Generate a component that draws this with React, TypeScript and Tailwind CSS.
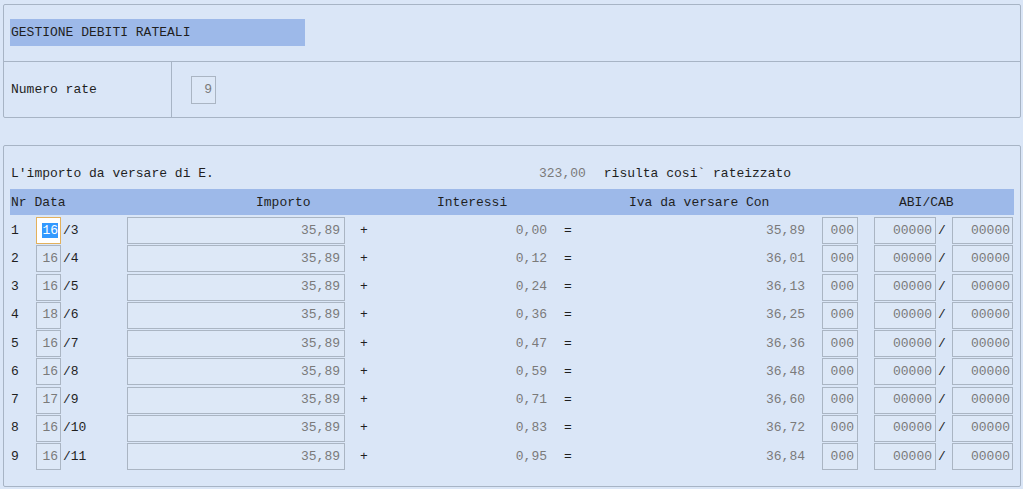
import React from 'react';

const rows = [
  { nr: 1, day: '16', month: '/3', importo: '35,89', interessi: '0,00', iva: '35,89' },
  { nr: 2, day: '16', month: '/4', importo: '35,89', interessi: '0,12', iva: '36,01' },
  { nr: 3, day: '16', month: '/5', importo: '35,89', interessi: '0,24', iva: '36,13' },
  { nr: 4, day: '18', month: '/6', importo: '35,89', interessi: '0,36', iva: '36,25' },
  { nr: 5, day: '16', month: '/7', importo: '35,89', interessi: '0,47', iva: '36,36' },
  { nr: 6, day: '16', month: '/8', importo: '35,89', interessi: '0,59', iva: '36,48' },
  { nr: 7, day: '17', month: '/9', importo: '35,89', interessi: '0,71', iva: '36,60' },
  { nr: 8, day: '16', month: '/10', importo: '35,89', interessi: '0,83', iva: '36,72' },
  { nr: 9, day: '16', month: '/11', importo: '35,89', interessi: '0,95', iva: '36,84' },
];

const Field: React.FC<{ className: string; value: string; focused?: boolean }> = ({ className, value, focused }) => (
  <div
    className={`h-[27px] flex items-center justify-end border ${
      focused ? 'bg-white border-[#e3b15c]' : 'bg-[#dde8f7] border-[#aab5c3]'
    } ${className}`}
  >
    {focused ? (
      <span className="bg-[#3399ff] text-white leading-[15px]">{value}</span>
    ) : (
      <span className="text-[#7a7a7a]">{value}</span>
    )}
  </div>
);

const App: React.FC = () => {
  return (
    <div className="w-[1023px] h-[489px] overflow-hidden bg-[#dae6f7] font-['Liberation_Mono',monospace] text-[13px] leading-[16px] text-[#1f1f1f] pt-[4px] pl-[3px] pr-[2px]">
      {/* testata */}
      <div className="h-[114px] border border-[#a7b4c5] rounded-[2px] flex flex-col">
        <div className="h-[57px] border-b border-[#a7b4c5] px-[6px] pt-[14px]">
          <div className="h-[27px] w-[295px] bg-[#9db9e9] flex items-center pl-[1px]">GESTIONE DEBITI RATEALI</div>
        </div>
        <div className="flex-1 flex">
          <div className="w-[168px] border-r border-[#a7b4c5] flex items-center pl-[7px]">Numero rate</div>
          <div className="flex items-center pl-[19px]">
            <Field className="w-[25px] h-[28px] pr-[3px]" value="9" />
          </div>
        </div>
      </div>

      {/* rate */}
      <div className="mt-[27px] h-[342px] border border-[#a7b4c5] rounded-[2px] px-[6px] pt-[20px]">
        <div className="h-[16px] flex">
          <span className="w-[529px] pl-[1px]">L'importo da versare di E.</span>
          <span className="text-[#7a7a7a]">323,00</span>
          <span className="ml-[18px]">risulta cosi` rateizzato</span>
        </div>

        <div className="mt-[7px] h-[26px] bg-[#9db9e9] flex items-center pt-[1px]">
          <span className="w-[246px] pl-[1px] whitespace-pre">Nr Data</span>
          <span className="w-[181px]">Importo</span>
          <span className="w-[192px]">Interessi</span>
          <span className="w-[270px] whitespace-pre">Iva da versare Con</span>
          <span>ABI/CAB</span>
        </div>

        <div className="mt-[2px] flex flex-col">
          {rows.map((r) => (
            <div key={r.nr} className="h-[28.25px] flex items-start">
              <div className="w-[26px] pl-[1px] h-[27px] flex items-center">{r.nr}</div>
              <Field className="w-[25px] pr-[2px]" value={r.day} focused={r.nr === 1} />
              <div className="w-[66px] pl-[2px] h-[27px] flex items-center">{r.month}</div>
              <Field className="w-[218px] pr-[4px]" value={r.importo} />
              <div className="w-[35px] pl-[15px] h-[27px] flex items-center">+</div>
              <div className="w-[167px] h-[27px] flex items-center justify-end text-[#7a7a7a]">{r.interessi}</div>
              <div className="w-[33px] pl-[17px] h-[27px] flex items-center">=</div>
              <div className="w-[225px] h-[27px] flex items-center justify-end text-[#7a7a7a]">{r.iva}</div>
              <div className="w-[17px]" />
              <Field className="w-[36px] pr-[3px]" value="000" />
              <div className="w-[16px]" />
              <Field className="w-[62px] pr-[3px]" value="00000" />
              <div className="w-[16px] pl-[2px] h-[27px] flex items-center">/</div>
              <Field className="w-[61px] pr-[2px]" value="00000" />
            </div>
          ))}
        </div>
      </div>
    </div>
  );
};

export default App;
